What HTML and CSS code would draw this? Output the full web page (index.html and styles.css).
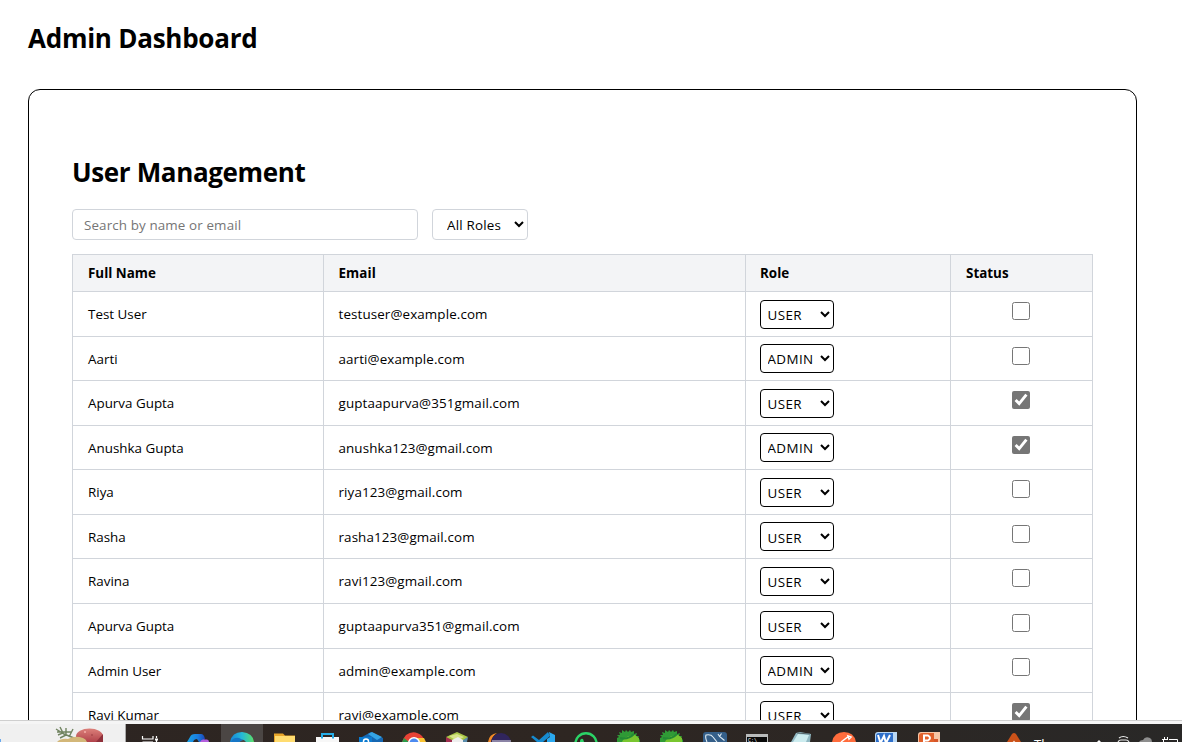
FILE: index.html
```html
<!DOCTYPE html>
<html lang="en">
<head>
<meta charset="utf-8">
<title>Admin Dashboard</title>
<link rel="stylesheet" href="styles.css">
</head>
<body>
<main class="page">
  <h1 class="title">Admin Dashboard</h1>
  <section class="card">
    <h2 class="title section-title">User Management</h2>
    <div class="filters">
      <input class="search" type="text" placeholder="Search by name or email">
      <select class="filter-role"><option>All Roles</option></select>
    </div>
    <div class="table">
      <div class="row head"><div>Full Name</div><div>Email</div><div>Role</div><div>Status</div></div>
      <div class="row"><div>Test User</div><div>testuser@example.com</div><div><select><option>USER</option></select></div><div><input type="checkbox"></div></div>
      <div class="row"><div>Aarti</div><div>aarti@example.com</div><div><select><option>ADMIN</option></select></div><div><input type="checkbox"></div></div>
      <div class="row"><div>Apurva Gupta</div><div>guptaapurva@351gmail.com</div><div><select><option>USER</option></select></div><div><input type="checkbox" checked></div></div>
      <div class="row"><div>Anushka Gupta</div><div>anushka123@gmail.com</div><div><select><option>ADMIN</option></select></div><div><input type="checkbox" checked></div></div>
      <div class="row"><div>Riya</div><div>riya123@gmail.com</div><div><select><option>USER</option></select></div><div><input type="checkbox"></div></div>
      <div class="row"><div>Rasha</div><div>rasha123@gmail.com</div><div><select><option>USER</option></select></div><div><input type="checkbox"></div></div>
      <div class="row"><div>Ravina</div><div>ravi123@gmail.com</div><div><select><option>USER</option></select></div><div><input type="checkbox"></div></div>
      <div class="row"><div>Apurva Gupta</div><div>guptaapurva351@gmail.com</div><div><select><option>USER</option></select></div><div><input type="checkbox"></div></div>
      <div class="row"><div>Admin User</div><div>admin@example.com</div><div><select><option>ADMIN</option></select></div><div><input type="checkbox"></div></div>
      <div class="row"><div>Ravi Kumar</div><div>ravi@example.com</div><div><select><option>USER</option></select></div><div><input type="checkbox" checked></div></div>
    </div>
  </section>
</main>
<footer class="taskbar">
<svg width="1182" height="18" viewBox="0 0 1182 18">
  <defs>
    <linearGradient id="bar"><stop offset="0" stop-color="#2d2522"/><stop offset=".5" stop-color="#2e2622"/><stop offset="1" stop-color="#292827"/></linearGradient>
    <linearGradient id="edge"><stop offset="0" stop-color="#1686d8"/><stop offset=".5" stop-color="#25b9d8"/><stop offset="1" stop-color="#5be068"/></linearGradient>
    <linearGradient id="cop"><stop offset="0" stop-color="#1aa5e8"/><stop offset=".6" stop-color="#1b7de0"/><stop offset="1" stop-color="#1a45b5"/></linearGradient>
    <linearGradient id="pot" x2="0" y2="1"><stop offset="0" stop-color="#dc807a"/><stop offset="1" stop-color="#a93842"/></linearGradient>
    <g id="gear"><path d="M0 18V14l2-1-2-2 3 0-1-3 3 1 0-3 3 2 1-2 2 2 2-2 1 2 3-1 0 3 3-1-1 3 3 0-1 2 2 2v4z" fill="#2f9a36"/><path d="M5 18c2-5 8-7 13-7l4 3v4z" fill="#79c62f"/><path d="M3 14q8 2 14-4" stroke="#238a35" stroke-width="2" fill="none"/></g>
  </defs>
  <rect width="1182" height="18" fill="url(#bar)"/>
  <rect width="125" height="18" fill="#f0f0f0"/><rect x="125" width="1" height="18" fill="#aaa"/>
  <rect y="15" width="1" height="3" fill="#68a9ee"/>
  <g fill="none" stroke="#718461" stroke-width="1.4"><path d="M56 5l8 5 10 4M60 3l3 6-5 2M66 4l0 7-6 3M73 5l-4 8M57 8h6l9 0"/></g>
  <ellipse cx="89.5" cy="12.5" rx="13.5" ry="8" fill="url(#pot)"/><path d="M103 10v8h-7z" fill="#8f303b"/><circle cx="85" cy="8" r="1" fill="#f4b1a8"/><circle cx="92" cy="11" r=".7" fill="#8c3036"/>
  <path d="M57 18q4-4 11-3 7-4 15-1 3 1 4 4z" fill="#d3b779"/>
  <path d="M142.5 12v3H153v-3M142.5 18H153M156.5 12v2M156.5 16v2" fill="none" stroke="#fff" stroke-width="1.2"/><path d="M155 14.500h3v2h-3z" fill="#fff"/>
  <path d="M187 18l3-5q1-3 5-3h6q3 0 4 5l-3 3h-3l-2-3q-3 0-4 3z" fill="url(#cop)"/><path d="M200 18q1-2.500 3-2.500h4q2 0 2 2.500z" fill="#b45fdd"/>
  <rect x="221" width="42" height="18" fill="#4b4644"/>
  <path d="M230 18q2-10 12-10 11 1 12 10h-8l-2-2q-3-1-5 2z" fill="url(#edge)"/><path d="M231 18q2-5 8-4l4 2-4 2z" fill="#1676c6"/>
  <path d="M274 9.500h9l2 2h10v6.500h-21z" fill="#e7a52a"/><path d="M275 12h20v6h-20z" fill="#ffdc70"/>
  <path d="M316 13h23v5h-23z" fill="#f7f7f7"/><path d="M322 14.500v-4.500h11v4.500" fill="none" stroke="#25aee9" stroke-width="2"/>
  <path d="M362 13l9-5 12 6v4h-21z" fill="#1667b2"/><path d="M368 10l4-2 10 5-5 3z" fill="#34a4e5"/><path d="M359 13h13v5h-13z" fill="#0c7bd0"/><circle cx="366" cy="17.500" r="2.500" fill="none" stroke="#fff" stroke-width="1.500"/>
  <path d="M402 18q2-5 4-7 8-6 16 1l2 3-10 0-5 3z" fill="#e74235"/><path d="M414 14h10l2 4h-9z" fill="#f9c331"/><path d="M402 18l2-4 5 4z" fill="#2c9b4b"/><circle cx="414" cy="19" r="6" fill="#fff"/><circle cx="414" cy="19" r="4.500" fill="#4c8af0"/>
  <path d="M446 13l11-5 11 5-5 4h-12z" fill="#a9c747"/><path d="M449 12l8-2 7 3-7 4z" fill="#d8e48a"/><path d="M446 13l6 3v2h-6z" fill="#a22e50"/><path d="M468 13l-5 3v2h4z" fill="#5a8cab"/><path d="M452 16l6-3 5 3v2h-11z" fill="#eee"/>
  <path d="M488 18q1-8 9-9-5 3-6 9z" fill="#f38b27"/><circle cx="501" cy="19" r="10" fill="#30255c"/><path d="M492 17h19" stroke="#e5e2ee"/>
  <path d="M531 13l2-1.500 6 4.500 9-8 2 4-7 6h-6z" fill="#168bd0"/><path d="M549 8l6 3v7h-8v-3l3-2z" fill="#2ba9f0"/>
  <circle cx="586" cy="20" r="10.700" fill="none" stroke="#2bd467" stroke-width="2.400"/><path d="M580 18q0-4 3-3l1 3z" fill="#2bd467"/>
  <use href="#gear" x="617"/><use href="#gear" x="660"/>
  <rect x="703" y="8" width="24" height="14" rx="3" fill="#355f89"/><path d="M707 18q-2-4-1-7 5-1 7 2l4 5M718 10l1.500 2.500 5 4M719.500 12.500l2-3" fill="none" stroke="#e0edf5" stroke-width="1.100"/>
  <path d="M746 10h22v8h-22z" fill="#b9bbbb"/><path d="M747 13h20v5h-20z" fill="#090909"/><text x="748" y="17.500" class="tiny">C:\</text>
  <path d="M796 9l4-1 11 2-1 8h-19z" fill="#91b9c3"/><path d="M798 10l11 1-3 7h-13z" fill="#ccecef"/><path d="M797 9l13 1" stroke="#56666b"/>
  <path d="M832 18q2-10 12-10t12 10z" fill="#ff6c3c"/><path d="M841 18l8-6M848 12l3 1-2 2z" stroke="#fff" stroke-width="1.500"/>
  <path d="M875 18v-7q0-3 3-3h19v10z" fill="#b9d8f4"/><path d="M876 18v-6q0-3 3-3h14v9z" fill="#2f70cb"/><path d="M878 11l2.500 8 3.500-7 2 7 4-8" fill="none" stroke="#fff" stroke-width="2"/>
  <path d="M918 18v-7q0-3 3-3h19v10z" fill="#f7c5a5"/><path d="M919 18v-6q0-3 3-3h12v9z" fill="#e1602a"/><path d="M924 18v-6.500h4q4 2.500 0 5h-4" fill="none" stroke="#fff" stroke-width="2"/><path d="M934 15h4v3h-4z" fill="#d6562a"/>
  <path d="M1007 18l5-8q2-2 4 0l5 8z" fill="#cb5219"/><circle cx="1014" cy="18" r="1.200" fill="#f3cbb5"/>
  <text x="1034" y="24.500" class="weather">Th</text>
  <path d="M1097 18l2-2 2 2z" fill="#fff"/>
  <path d="M1119 14q4-3 9 0M1118 18q1-2 3-2h5q2 0 3 2" fill="none" stroke="#eee" stroke-width="1.200"/>
  <path d="M1139 18q1-2 4-2 2-4 7-2 2 1 2 4z" fill="#8e8e8e"/>
  <path d="M1162 15.500h6M1164.500 13v2M1167.500 13v2M1163.500 16v2M1169 15.500h8.500v2.500" fill="none" stroke="#fff"/>
</svg>
</footer>
</body>
</html>
```
FILE: styles.css
```css
* { box-sizing: border-box; }
body {
  margin: 0;
  height: 742px;
  display: flex;
  flex-direction: column;
  overflow: hidden;
  background: #fff;
  color: #000;
  font-family: "Open Sans", "Noto Sans", sans-serif;
  font-size: 13.4px;
}
.page {
  height: 720px;
  overflow: hidden;
  padding: 20px 45px 0 28px;
}
.title {
  margin: 0;
  font-size: 26px;
  line-height: 36px;
  font-weight: 700;
  letter-spacing: -.25px;
}
.section-title { line-height: 35px; margin-bottom: 19px; letter-spacing: -.36px; }
.card {
  height: 800px;
  margin-top: 33px;
  padding: 65px 43px 0;
  border: 1px solid #000;
  border-radius: 12px;
}
.filters {
  display: flex;
  gap: 14px;
  margin-bottom: 14px;
}
input, select { margin: 0; font: inherit; color: #000; }
.search, .filter-role {
  height: 31px;
  border: 1px solid #d1d5db;
  border-radius: 4px;
  background: #fff;
}
.search { width: 346px; padding: 1px 11px 0; letter-spacing: .12px; }
.search::placeholder { color: #757575; }
.filter-role { width: 96px; padding: 1px 0 0 10px; letter-spacing: .2px; }
.table {
  border-top: 1px solid #d1d5db;
  border-left: 1px solid #d1d5db;
}
.row {
  display: grid;
  grid-template-columns: 251px 422px 205px 142px;
  height: 44.57px;
}
.row > div {
  display: flex;
  align-items: center;
  padding: .5px 14px 0 15px;
  border-right: 1px solid #d1d5db;
  border-bottom: 1px solid #d1d5db;
}
.row.head { height: 37px; background: #f3f4f6; font-weight: 700; }
.row > div:nth-child(2) { padding-left: 14.5px; letter-spacing: .11px; }
.row > div:nth-child(n+3) { padding-left: 14px; }
.row > div:nth-child(4) { padding-left: 15px; }
.row:not(.head) > div:nth-child(4) { justify-content: center; padding: .4px 1px 6px 0; }
.row select {
  width: 74px;
  height: 29px;
  padding: 1.5px 0 0 2.5px;
  border: 1px solid #000;
  border-radius: 4px;
  background: #fff;
  letter-spacing: .4px;
}
.row input { width: 18px; height: 18px; accent-color: #767676; }
.taskbar {
  height: 22px;
  padding-top: 3px;
  border-top: 1px solid #cfcfcf;
  background: #f5f5f5;
}
.taskbar svg { display: block; }
.tiny { font: 5px "Liberation Mono", monospace; fill: #fff; }
.weather { font: 13px "Open Sans", sans-serif; fill: #fff; }
```
